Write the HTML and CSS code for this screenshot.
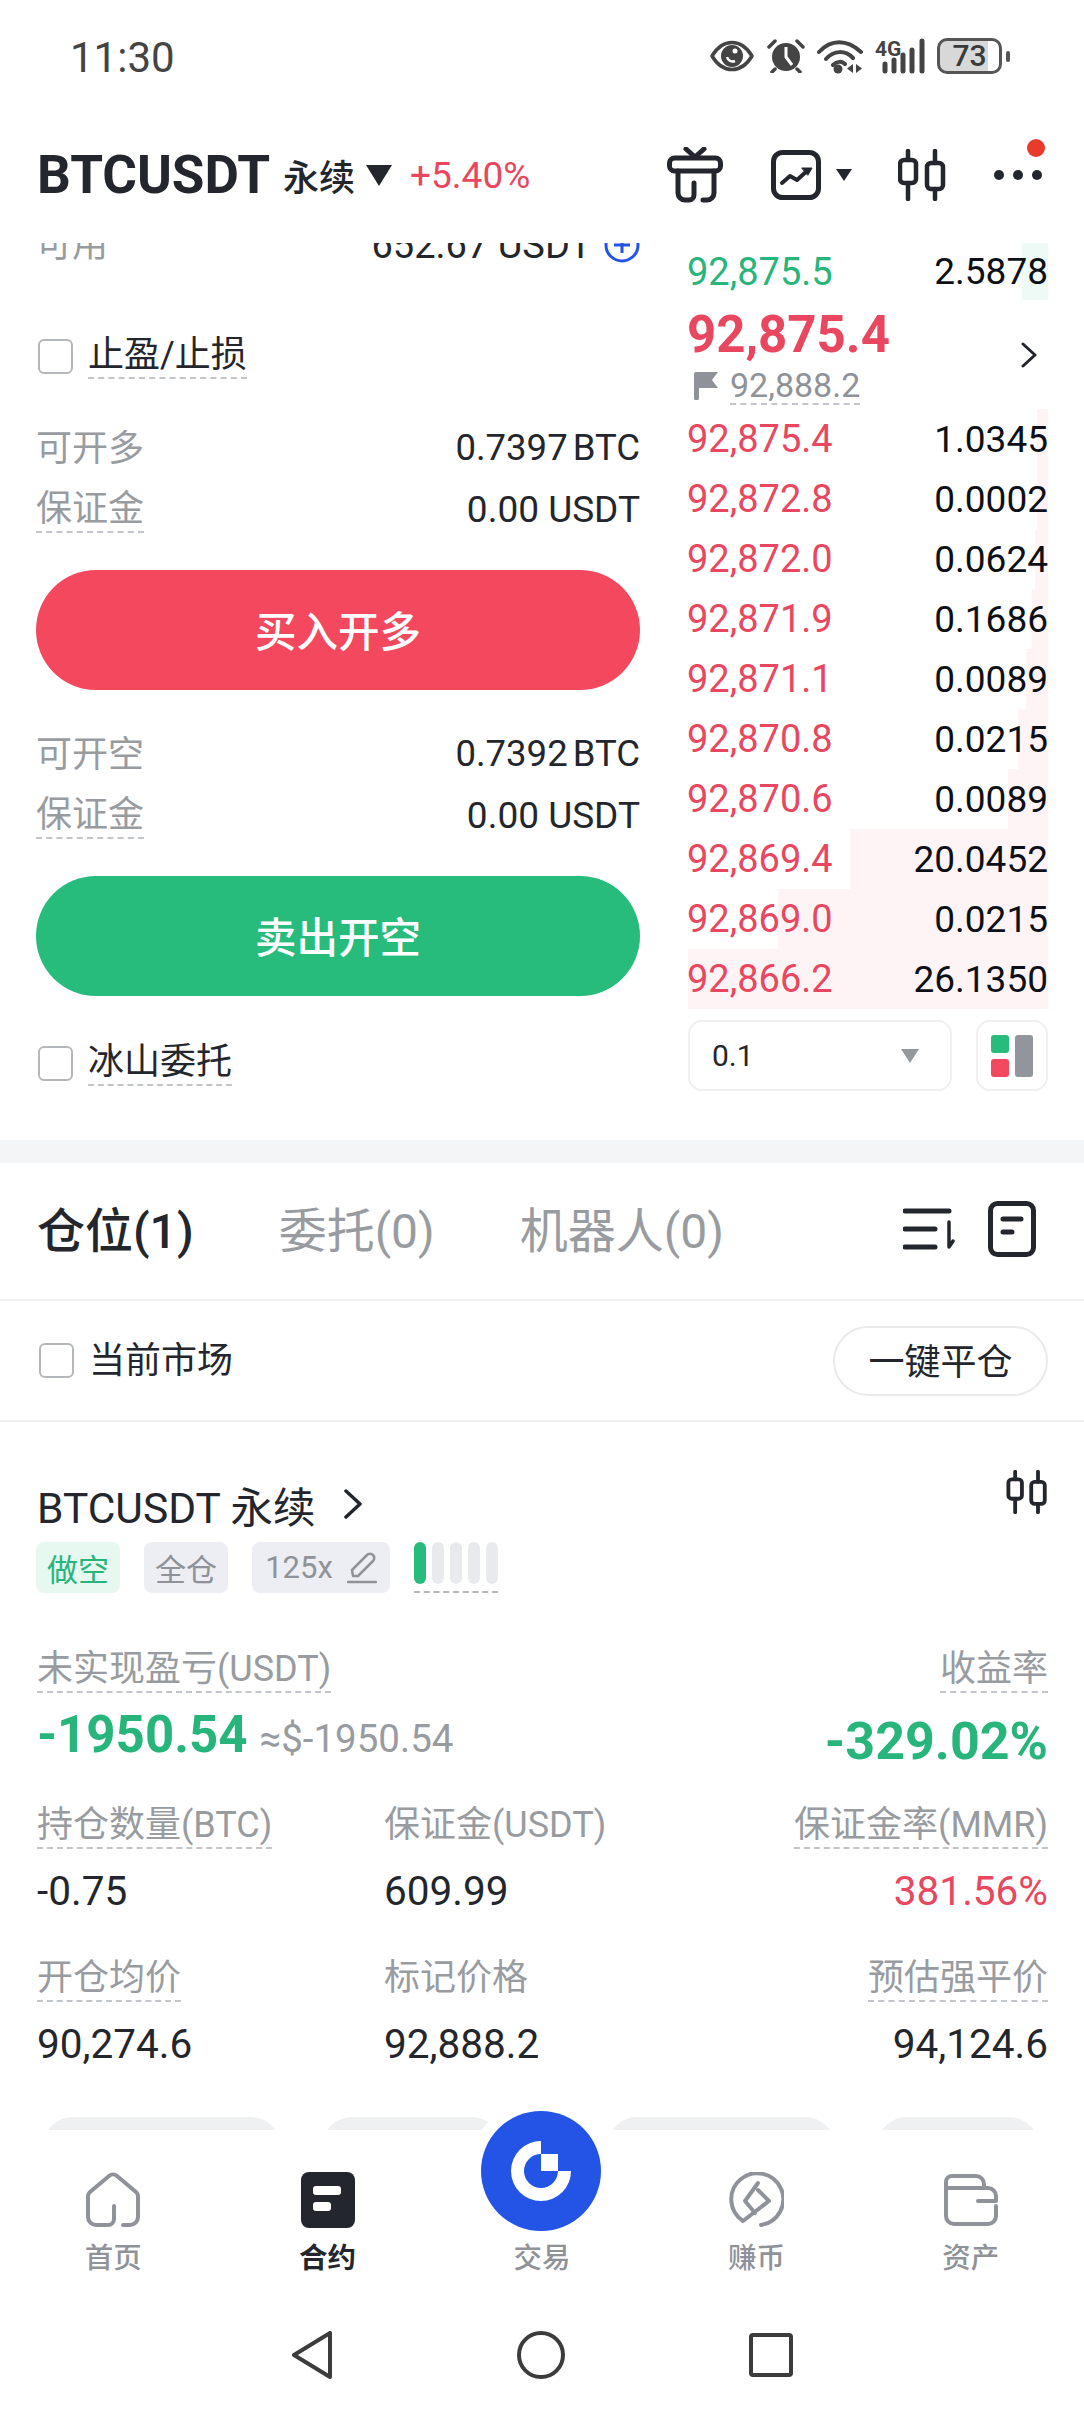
FILE: index.html
```html
<!DOCTYPE html>
<html lang="zh">
<head>
    <meta charset="UTF-8">
    <meta name="viewport" content="width=device-width, initial-scale=1.0">
    <link rel="stylesheet" href="styles.css">
    <title>BTCUSDT 永续</title>
</head>
<body>
<div class="page">

    <!-- status bar -->
    <div class="status">
        <span class="time">11:30</span>
        <div class="status-icons">
            <svg width="46" height="32" viewBox="0 0 44 32"><path d="M2 16C8 6 15 2.500 22 2.500S36 6 42 16C36 26 29 29.500 22 29.500S8 26 2 16Z" fill="none" stroke="#444" stroke-width="3.500" stroke-linejoin="round"/><circle cx="22" cy="16" r="11" fill="#444"/><path d="M17 17a6 6 0 0 0 8 4" fill="none" stroke="#fff" stroke-width="2.500"/><circle cx="25" cy="11" r="2.500" fill="#fff"/></svg>
            <svg width="38" height="34" viewBox="0 0 38 34"><circle cx="19" cy="18" r="14" fill="#444"/><path d="M19 8V18L25 26" fill="none" stroke="#fff" stroke-width="3"/><path d="M2 8L8 2M36 8L30 2M8 30L5 33M30 30L33 33" stroke="#444" stroke-width="3.500" stroke-linecap="round"/></svg>
            <svg width="46" height="36" viewBox="0 0 46 36"><path d="M2 14C14 1 30 1 44 14M9 21C17 12 28 12 36 20M16 27C20 23 25 23 28 26" fill="none" stroke="#444" stroke-width="4" stroke-linecap="round"/><circle cx="21" cy="31" r="4.500" fill="#444"/><path d="M36 26V35L30 30.500ZM39 26V35L45 30.500Z" fill="#444"/></svg>
            <svg width="50" height="36" viewBox="0 0 50 36"><text x="0" y="18" class="net-text">4G</text><g stroke="#444" stroke-width="5" stroke-linecap="round"><path d="M10 26V33M19 22V33M28 17V33M37 12V33M47 3V33"/></g></svg>
            <div class="battery">73</div>
            <span class="battery-nub"></span>
        </div>
    </div>

    <!-- symbol header -->
    <div class="header">
        <span class="symbol">BTCUSDT</span>
        <span class="perp">永续</span>
        <span class="tri-down"></span>
        <span class="change">+5.40%</span>
        <div class="header-tools">
            <svg width="56" height="56" viewBox="0 0 56 56" fill="none" stroke="#23262d" stroke-width="5" stroke-linecap="round" stroke-linejoin="round"><rect x="2.500" y="11" width="51" height="13" rx="5"/><path d="M19 2L28 10L37 2"/><path d="M11 24V46a7 7 0 0 0 7 7H22a5 5 0 0 0 5-5V36"/><path d="M47 24V46a7 7 0 0 1-7 7H36"/></svg>
            <div class="chart-tool">
                <svg width="50" height="50" viewBox="0 0 50 50" fill="none" stroke="#23262d" stroke-linecap="round" stroke-linejoin="round"><rect x="2.500" y="2.500" width="45" height="45" rx="9" stroke-width="5"/><path d="M11 33L19 26L26 30L37 20" stroke-width="4"/><path d="M31 18H41L37 25Z" fill="#23262d" stroke-width="1"/></svg>
                <span class="tri-small"></span>
            </div>
            <svg width="48" height="52" viewBox="0 0 48 52" fill="none" stroke="#23262d" stroke-width="4.500" stroke-linecap="round" stroke-linejoin="round"><path d="M10 2V11M10 34V50M37 2V14M37 40V50"/><rect x="2" y="11" width="16" height="23" rx="4"/><rect x="29" y="14" width="16" height="26" rx="4"/></svg>
            <div class="more">
                <span class="more-dot"></span><span class="more-dot"></span><span class="more-dot"></span>
                <span class="red-dot"></span>
            </div>
        </div>
    </div>

    <!-- order form + order book -->
    <div class="trade">
        <div class="form">
            <div class="avail">
                <span class="muted">可用</span>
                <div class="avail-right">
                    <span>652.67 USDT</span>
                    <svg width="36" height="36" viewBox="0 0 36 36" fill="none" stroke="#2354e6" stroke-width="3"><circle cx="18" cy="18" r="16"/><path d="M18 10V26M10 18H26"/></svg>
                </div>
            </div>
            <div class="check-row tp-row">
                <span class="check"></span>
                <span class="dash">止盈/止损</span>
            </div>
            <div class="info-block">
                <div class="info-row"><span class="muted plain">可开多</span><span class="info-val btc">0.7397 BTC</span></div>
                <div class="info-row"><span class="muted dash">保证金</span><span class="info-val">0.00 USDT</span></div>
            </div>
            <div class="big-btn buy">买入开多</div>
            <div class="info-block">
                <div class="info-row"><span class="muted plain">可开空</span><span class="info-val btc">0.7392 BTC</span></div>
                <div class="info-row"><span class="muted dash">保证金</span><span class="info-val">0.00 USDT</span></div>
            </div>
            <div class="big-btn sell">卖出开空</div>
            <div class="check-row iceberg-row">
                <span class="check"></span>
                <span class="dash">冰山委托</span>
            </div>
        </div>

        <div class="book">
            <div class="book-row first-row">
                <span class="depth depth-green" style="width: 26px"></span>
                <span class="price green">92,875.5</span><span class="vol">2.5878</span>
            </div>
            <div class="mark-block">
                <div>
                    <div class="last-price">92,875.4</div>
                    <div class="mark-row">
                        <svg width="24" height="28" viewBox="0 0 24 28"><path d="M0 2a2 2 0 0 1 2-2H24L18 8L24 16H5V26a2.500 2.500 0 0 1-5 0Z" fill="#8f9399"/></svg>
                        <span class="mark-price">92,888.2</span>
                    </div>
                </div>
                <svg width="16" height="26" viewBox="0 0 16 26" fill="none" stroke="#23262d" stroke-width="3" stroke-linecap="round" stroke-linejoin="round"><path d="M2 2L14 13L2 24"/></svg>
            </div>
            <div class="book-row"><span class="depth" style="width: 11px"></span><span class="price red">92,875.4</span><span class="vol">1.0345</span></div>
            <div class="book-row"><span class="depth" style="width: 11px"></span><span class="price red">92,872.8</span><span class="vol">0.0002</span></div>
            <div class="book-row"><span class="depth" style="width: 13px"></span><span class="price red">92,872.0</span><span class="vol">0.0624</span></div>
            <div class="book-row"><span class="depth" style="width: 16px"></span><span class="price red">92,871.9</span><span class="vol">0.1686</span></div>
            <div class="book-row"><span class="depth" style="width: 22px"></span><span class="price red">92,871.1</span><span class="vol">0.0089</span></div>
            <div class="book-row"><span class="depth" style="width: 30px"></span><span class="price red">92,870.8</span><span class="vol">0.0215</span></div>
            <div class="book-row"><span class="depth" style="width: 40px"></span><span class="price red">92,870.6</span><span class="vol">0.0089</span></div>
            <div class="book-row"><span class="depth" style="width: 198px"></span><span class="price red">92,869.4</span><span class="vol">20.0452</span></div>
            <div class="book-row"><span class="depth" style="width: 270px"></span><span class="price red">92,869.0</span><span class="vol">0.0215</span></div>
            <div class="book-row"><span class="depth" style="width: 360px"></span><span class="price red">92,866.2</span><span class="vol">26.1350</span></div>
            <div class="book-tools">
                <div class="step-select">0.1<span class="tri-gray"></span></div>
                <div class="layout-btn">
                    <svg width="42" height="42" viewBox="0 0 42 42"><rect x="0" y="0" width="18" height="18" rx="3" fill="#27bc7c"/><rect x="0" y="24" width="18" height="18" rx="3" fill="#f4485e"/><rect x="24" y="0" width="18" height="42" rx="3" fill="#92969c"/></svg>
                </div>
            </div>
        </div>
    </div>

    <div class="band"></div>

    <!-- positions tabs -->
    <div class="tabs">
        <span class="tab active">仓位(1)</span>
        <span class="tab">委托(0)</span>
        <span class="tab">机器人(0)</span>
        <div class="tab-tools">
            <svg width="52" height="42" viewBox="0 0 52 42" fill="none" stroke="#23262d" stroke-width="5" stroke-linecap="round" stroke-linejoin="round"><path d="M2 3H46M2 21H32M2 39H32"/><path d="M46 14V39L50 33" stroke-width="3.500"/></svg>
            <svg width="48" height="56" viewBox="0 0 48 56" fill="none" stroke="#23262d" stroke-width="5" stroke-linecap="round"><rect x="2.500" y="2.500" width="43" height="51" rx="7"/><path d="M15 18H33M15 31H24"/></svg>
        </div>
    </div>

    <div class="filter">
        <div class="check-row">
            <span class="check"></span>
            <span>当前市场</span>
        </div>
        <div class="close-all">一键平仓</div>
    </div>

    <!-- position card -->
    <div class="position">
        <div class="pos-title">
            <span>BTCUSDT 永续</span>
            <svg class="pos-chevron" width="18" height="30" viewBox="0 0 18 30" fill="none" stroke="#23262d" stroke-width="3.500" stroke-linecap="round" stroke-linejoin="round"><path d="M2 2L16 15L2 28"/></svg>
            <svg class="pos-candle" width="42" height="44" viewBox="0 0 48 52" fill="none" stroke="#23262d" stroke-width="4.500" stroke-linecap="round" stroke-linejoin="round"><path d="M10 2V11M10 34V50M37 2V14M37 40V50"/><rect x="2" y="11" width="16" height="23" rx="4"/><rect x="29" y="14" width="16" height="26" rx="4"/></svg>
        </div>
        <div class="tag-row">
            <span class="tag tag-short">做空</span>
            <span class="tag">全仓</span>
            <span class="tag tag-lev">125x
                <svg width="30" height="32" viewBox="0 0 30 32" fill="none" stroke="#8f9399" stroke-width="2.500" stroke-linecap="round" stroke-linejoin="round"><path d="M1 30H29"/><path d="M6 24L5 18L20 3a4 4 0 0 1 6 6L11 24Z"/></svg>
            </span>
            <div class="risk">
                <span class="risk-bar on"></span><span class="risk-bar"></span><span class="risk-bar"></span><span class="risk-bar"></span><span class="risk-bar"></span>
            </div>
        </div>

        <div class="pnl-block">
            <div>
                <div class="stat-label"><span class="dash">未实现盈亏(USDT)</span></div>
                <div class="pnl-line"><span class="pnl-val green">-1950.54</span><span class="pnl-usd">≈$-1950.54</span></div>
            </div>
            <div class="right">
                <div class="stat-label"><span class="dash">收益率</span></div>
                <div class="roe green">-329.02%</div>
            </div>
        </div>

        <div class="stat-grid">
            <div class="stat">
                <div class="stat-label"><span class="dash">持仓数量(BTC)</span></div>
                <div class="stat-val">-0.75</div>
            </div>
            <div class="stat">
                <div class="stat-label"><span class="nodash">保证金(USDT)</span></div>
                <div class="stat-val">609.99</div>
            </div>
            <div class="stat right">
                <div class="stat-label"><span class="dash">保证金率(MMR)</span></div>
                <div class="stat-val red">381.56%</div>
            </div>
            <div class="stat">
                <div class="stat-label"><span class="dash">开仓均价</span></div>
                <div class="stat-val">90,274.6</div>
            </div>
            <div class="stat">
                <div class="stat-label"><span class="nodash">标记价格</span></div>
                <div class="stat-val">92,888.2</div>
            </div>
            <div class="stat right">
                <div class="stat-label"><span class="dash">预估强平价</span></div>
                <div class="stat-val">94,124.6</div>
            </div>
        </div>

        <div class="peek">
            <span class="peek-btn p1"></span>
            <span class="peek-btn p2"></span>
            <span class="peek-btn p3"></span>
            <span class="peek-btn p4"></span>
        </div>
    </div>

    <!-- bottom tab bar -->
    <div class="tabbar">
        <div class="nav-item">
            <svg width="54" height="56" viewBox="0 0 54 56" fill="none" stroke="#8f9399" stroke-width="4" stroke-linecap="round" stroke-linejoin="round"><path d="M20 53H10a8 8 0 0 1-8-8V25a6 6 0 0 1 2-5L23 4a6 6 0 0 1 8 0L50 20a6 6 0 0 1 2 5V45a8 8 0 0 1-8 8H37"/><path d="M28 34V47a6 6 0 0 1-6 6"/></svg>
            <span>首页</span>
        </div>
        <div class="nav-item current">
            <svg width="54" height="56" viewBox="0 0 54 56"><rect width="54" height="56" rx="8" fill="#23262d"/><rect x="12" y="14" width="28" height="9" rx="3" fill="#fff"/><rect x="12" y="30" width="18" height="9" rx="3" fill="#fff"/></svg>
            <span>合约</span>
        </div>
        <div class="nav-item">
            <span class="nav-spacer"></span>
            <span>交易</span>
        </div>
        <div class="nav-item">
            <svg width="56" height="56" viewBox="0 0 56 56" fill="none" stroke="#8f9399" stroke-width="4" stroke-linecap="round" stroke-linejoin="round"><path d="M33 53A26 26 0 1 0 15 49L41 29L30 18"/><path d="M30 11L17 29L27 41"/></svg>
            <span>赚币</span>
        </div>
        <div class="nav-item">
            <svg width="54" height="52" viewBox="0 0 54 52" fill="none" stroke="#8f9399" stroke-width="4" stroke-linecap="round" stroke-linejoin="round"><path d="M2 14V8a6 6 0 0 1 6-6H32a8 8 0 0 1 8 8V14"/><path d="M2 14H44a8 8 0 0 1 8 8V27H34"/><path d="M2 14V42a8 8 0 0 0 8 8H44a8 8 0 0 0 8-8V32"/></svg>
            <span>资产</span>
        </div>
    </div>
    <div class="trade-fab">
        <svg width="120" height="120" viewBox="0 0 120 120"><circle cx="60" cy="60" r="60" fill="#2354e6"/><path d="M60 30A30 30 0 1 0 90 60H77A17 17 0 1 1 60 43Z" fill="#fff"/><rect x="60" y="43" width="17" height="17" fill="#fff"/></svg>
    </div>

    <!-- system nav -->
    <div class="sysnav">
        <svg width="42" height="48" viewBox="0 0 42 48" fill="none" stroke="#3c3c3c" stroke-width="4" stroke-linejoin="round"><path d="M39 2V46L3 24Z"/></svg>
        <svg width="48" height="48" viewBox="0 0 48 48" fill="none" stroke="#3c3c3c" stroke-width="4"><circle cx="24" cy="24" r="22"/></svg>
        <svg width="44" height="44" viewBox="0 0 44 44" fill="none" stroke="#3c3c3c" stroke-width="4" stroke-linejoin="round"><rect x="2" y="2" width="40" height="40" rx="2"/></svg>
    </div>
</div>
</body>
</html>
```

FILE: styles.css
```css
* {
    box-sizing: border-box;
}

body {
    margin: 0;
    background: #fff;
    color: #23262d;
    font-family: Roboto, "Noto Sans CJK SC", sans-serif;
    font-size: 36px;
}

.page {
    position: relative;
    width: 1084px;
    height: 2412px;
    display: flex;
    flex-direction: column;
    overflow: hidden;
}

.muted { color: #989ca1; }
.green { color: #27b57c; }
.red { color: #e8475f; }
.right { text-align: right; }

.dash {
    display: inline-block;
    line-height: 42px;
    padding-bottom: 1px;
    border-bottom: 2px dashed #c2c5ca;
}

.nodash {
    display: inline-block;
    line-height: 42px;
    padding-bottom: 3px;
}

/* status bar */
.status {
    height: 114px;
    flex: none;
    display: flex;
    justify-content: space-between;
    align-items: center;
    padding: 0 74px 0 70px;
    color: #444;
}

.time {
    font-size: 42px;
}

.status-icons {
    display: flex;
    align-items: center;
    gap: 12px;
    margin-top: -2px;
}

.net-text {
    font: 700 21px Roboto, sans-serif;
    fill: #444;
}

.battery {
    width: 65px;
    height: 36px;
    border: 3px solid #555;
    border-radius: 10px;
    background: linear-gradient(90deg, #d8d8d8 48px, #fff 48px);
    font-size: 30px;
    font-weight: 500;
    line-height: 30px;
    text-align: center;
    color: #3a3a3a;
}

.battery-nub {
    width: 4px;
    height: 11px;
    margin-left: -8px;
    border-radius: 2px;
    background: #555;
}

/* header */
.header {
    height: 129px;
    flex: none;
    display: flex;
    align-items: center;
    padding: 0 42px 7px 37px;
}

.symbol {
    font-size: 53px;
    font-weight: 700;
    white-space: nowrap;
}

.perp {
    margin-left: 13px;
    font-size: 36px;
    font-weight: 500;
}

.tri-down {
    width: 0;
    height: 0;
    margin-left: 11px;
    border-left: 13px solid transparent;
    border-right: 13px solid transparent;
    border-top: 21px solid #23262d;
}

.change {
    margin-left: 18px;
    color: #e8475f;
    font-size: 37px;
}

.header-tools {
    margin-left: auto;
    display: flex;
    align-items: center;
    gap: 48px;
}

.chart-tool {
    display: flex;
    align-items: center;
    gap: 15px;
    margin-right: -2px;
}

.tri-small {
    width: 0;
    height: 0;
    border-left: 8px solid transparent;
    border-right: 8px solid transparent;
    border-top: 12px solid #23262d;
}

.more {
    position: relative;
    display: flex;
    gap: 9px;
}

.more-dot {
    width: 10px;
    height: 10px;
    border-radius: 50%;
    background: #23262d;
}

.red-dot {
    position: absolute;
    top: -31px;
    right: -3px;
    width: 18px;
    height: 18px;
    border-radius: 50%;
    background: #ea3a2b;
}

/* trade area */
.trade {
    height: 897px;
    flex: none;
    display: flex;
    justify-content: space-between;
    padding: 0 36px;
    overflow: hidden;
}

.form {
    width: 604px;
}

.avail {
    height: 27px;
    display: flex;
    justify-content: space-between;
    align-items: flex-end;
    overflow: hidden;
    line-height: 50px;
}

.avail-right {
    display: flex;
    align-items: center;
    gap: 12px;
    height: 50px;
    font-size: 38px;
}

.check-row {
    display: flex;
    align-items: center;
    gap: 15px;
    line-height: 42px;
}

.check {
    width: 35px;
    height: 35px;
    margin-left: 2px;
    border: 2.500px solid #b4b7bb;
    border-radius: 6px;
    background: #fff;
}

.tp-row {
    margin-top: 58px;
    height: 56px;
}

.iceberg-row {
    margin-top: 39px;
    height: 56px;
}

.info-block {
    margin-top: 32px;
}

.info-row {
    height: 62px;
    display: flex;
    justify-content: space-between;
    align-items: center;
}

.info-row .dash {
    margin-top: 3px;
}

.info-row .plain {
    padding-bottom: 5px;
}

.info-val {
    font-size: 37px;
}

.info-val.btc {
    font-size: 36.500px;
    word-spacing: -4px;
}

.big-btn {
    height: 120px;
    margin-top: 30px;
    padding-bottom: 2px;
    border-radius: 60px;
    display: flex;
    justify-content: center;
    align-items: center;
    color: #fff;
    font-size: 41.500px;
    font-weight: 500;
}

.buy { background: #f4485e; }
.sell { background: #27bc7c; }

/* order book */
.book {
    width: 360px;
}

.book-row {
    position: relative;
    height: 60px;
    display: flex;
    justify-content: space-between;
    align-items: center;
}

.book-row span:not(.depth) {
    position: relative;
}

.first-row {
    height: 57px;
}

.depth {
    position: absolute;
    top: 0;
    right: 0;
    bottom: 0;
    background: #fef4f5;
}

.depth-green {
    background: #eefaf5;
}

.price {
    font-size: 38px;
    margin-left: -1px;
}

.vol {
    color: #0d1017;
    font-size: 37px;
}

.mark-block {
    height: 109px;
    display: flex;
    justify-content: space-between;
    align-items: center;
    padding: 0 11px 0 0;
}

.last-price {
    color: #e8475f;
    font-size: 51px;
    font-weight: 700;
    line-height: 62px;
    margin-left: -1px;
}

.mark-row {
    display: flex;
    align-items: center;
    gap: 12px;
    padding-left: 6px;
}

.mark-price {
    color: #8f9399;
    font-size: 34px;
    line-height: 36px;
    border-bottom: 2px dashed #c2c5ca;
    margin-top: 1px;
}

.book-tools {
    margin-top: 11px;
    display: flex;
    justify-content: space-between;
}

.step-select {
    width: 264px;
    height: 71px;
    padding: 0 31px 0 22px;
    border: 2.500px solid #eeeff1;
    border-radius: 14px;
    display: flex;
    justify-content: space-between;
    align-items: center;
    font-size: 30px;
}

.tri-gray {
    width: 0;
    height: 0;
    border-left: 9px solid transparent;
    border-right: 9px solid transparent;
    border-top: 14px solid #95989c;
}

.layout-btn {
    width: 72px;
    height: 71px;
    border: 2.500px solid #eeeff1;
    border-radius: 14px;
    display: flex;
    justify-content: center;
    align-items: center;
}

.band {
    height: 23px;
    flex: none;
    background: #f4f5f6;
}

/* tabs */
.tabs {
    height: 138px;
    flex: none;
    display: flex;
    align-items: center;
    padding: 0 48px 8px 37px;
    border-bottom: 2.500px solid #eff0f2;
}

.tab {
    margin-right: 85px;
    color: #989ca1;
    font-size: 48px;
}

.tab.active {
    color: #23262d;
    font-weight: 500;
}

.tab-tools {
    margin-left: auto;
    display: flex;
    align-items: center;
    gap: 33px;
    margin-top: 4px;
}

.filter {
    height: 121px;
    flex: none;
    display: flex;
    justify-content: space-between;
    align-items: center;
    padding: 0 36px 0 37px;
    border-bottom: 2.500px solid #eff0f2;
}

.close-all {
    width: 215px;
    height: 70px;
    padding-bottom: 3px;
    border: 2.500px solid #e8eaec;
    border-radius: 35px;
    display: flex;
    justify-content: center;
    align-items: center;
}

/* position */
.position {
    flex: 1;
    min-height: 0;
    display: flex;
    flex-direction: column;
    padding: 0 36px 0 37px;
    overflow: hidden;
}

.pos-title {
    height: 60px;
    margin-top: 52px;
    display: flex;
    align-items: center;
    font-size: 42.500px;
    white-space: pre;
}

.pos-chevron {
    margin-left: 28px;
}

.pos-candle {
    margin-left: auto;
    margin-top: -24px;
}

.tag-row {
    margin-top: 8px;
    display: flex;
    gap: 24px;
    margin-left: -1px;
}

.tag {
    height: 51px;
    width: 84px;
    border-radius: 8px;
    background: #eceef3;
    color: #8f9399;
    display: flex;
    justify-content: center;
    align-items: center;
    gap: 14px;
    font-size: 31px;
}

.tag-short {
    background: #e6f8f0;
    color: #27b57c;
}

.tag-lev {
    width: 138px;
}

.risk {
    height: 51px;
    display: flex;
    align-items: flex-start;
    gap: 6px;
    border-bottom: 2px dashed #b4b7bb;
}

.risk-bar {
    width: 12px;
    height: 42px;
    border-radius: 6px;
    background: #e8eaed;
}

.risk-bar.on {
    background: #27bc7c;
}

.pnl-block {
    margin-top: 53px;
    display: flex;
    justify-content: space-between;
}

.stat-label {
    color: #989ca1;
    line-height: 46px;
    height: 46px;
}

.pnl-line {
    display: flex;
    align-items: baseline;
    gap: 12px;
    margin-top: 12px;
    line-height: 62px;
}

.pnl-val,
.roe {
    font-size: 52px;
    font-weight: 700;
}

.pnl-val {
    font-size: 51px;
}

.pnl-usd {
    color: #989ca1;
    font-size: 38.500px;
}

.roe {
    margin-top: 19px;
    line-height: 62px;
}

.stat-grid {
    margin-top: 29px;
    display: grid;
    grid-template-columns: 347px 1fr auto;
    row-gap: 41px;
}

.stat-val {
    margin-top: 20px;
    font-size: 40.500px;
    line-height: 46px;
}

.peek {
    margin-top: auto;
    height: 13px;
    flex: none;
    overflow: hidden;
    display: flex;
    margin-left: -37px;
    margin-right: -36px;
    padding-left: 43px;
}

.peek-btn {
    height: 60px;
    flex: none;
    border-radius: 30px;
    background: #eef0f2;
}

.p1 { width: 238px; }
.p2 { width: 180px; margin-left: 41px; }
.p3 { width: 228px; margin-left: 105px; }
.p4 { width: 162px; margin-left: 42px; }

/* bottom tabs */
.tabbar {
    height: 170px;
    flex: none;
    display: grid;
    grid-template-columns: repeat(5, 1fr);
    padding: 42px 6px 0;
    background: #fff;
}

.nav-item {
    display: flex;
    flex-direction: column;
    align-items: center;
    justify-content: flex-start;
    gap: 11px;
    font-size: 28.500px;
    color: #8f9399;
    font-weight: 500;
    line-height: 40px;
}

.nav-item svg {
    height: 56px;
    flex: none;
}

.nav-item.current {
    color: #23262d;
    font-weight: 700;
}

.nav-spacer {
    height: 56px;
    flex: none;
}

.trade-fab {
    position: absolute;
    left: 469px;
    top: 2099px;
    width: 144px;
    height: 144px;
    border-radius: 50%;
    background: #fff;
    display: flex;
    justify-content: center;
    align-items: center;
}

/* system nav */
.sysnav {
    height: 112px;
    flex: none;
    display: flex;
    align-items: center;
    justify-content: center;
    gap: 184px;
    padding-bottom: 2px;
}
```
